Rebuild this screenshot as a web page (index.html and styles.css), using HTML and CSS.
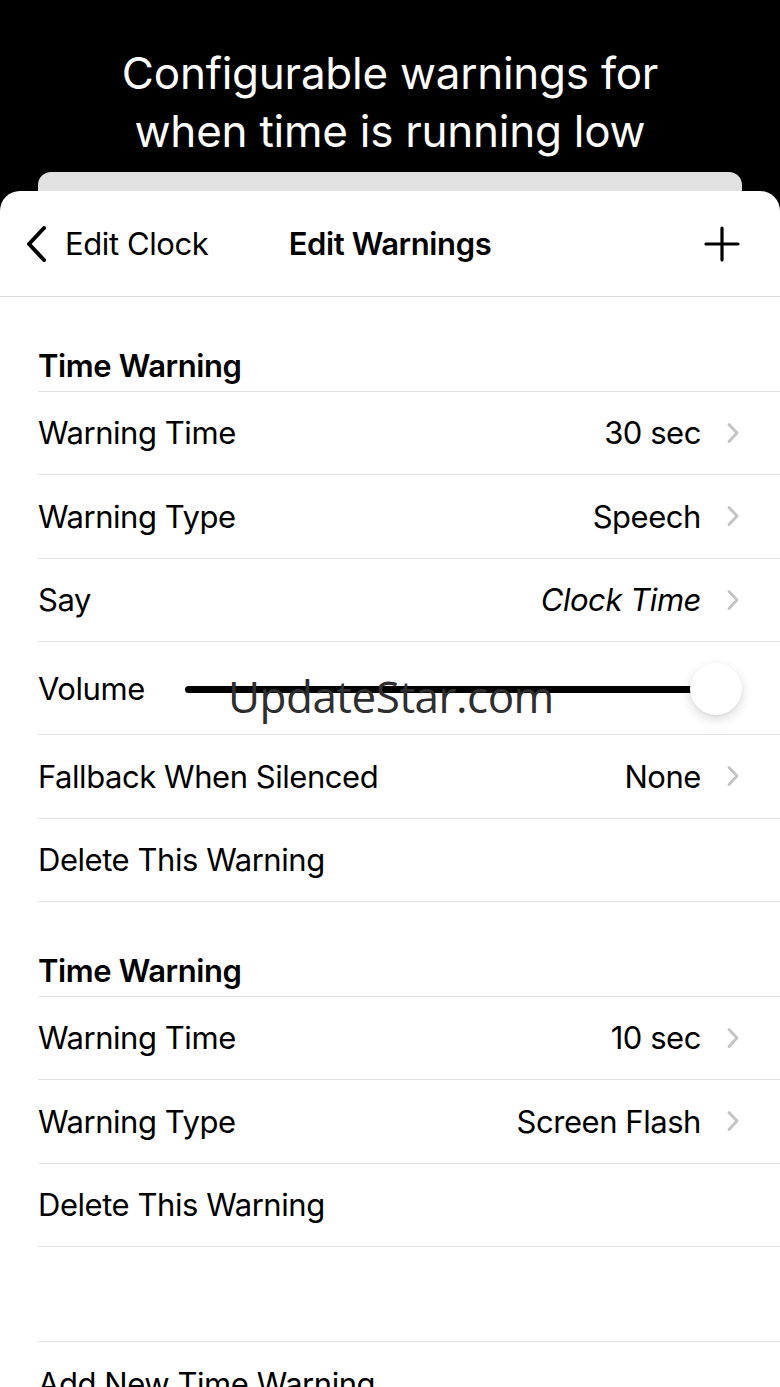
FILE: index.html
```html
<!DOCTYPE html>
<html lang="en">
<head>
<meta charset="utf-8">
<title>Edit Warnings</title>
<link rel="stylesheet" href="styles.css">
</head>
<body>
<div class="page">
  <header class="hero">
    <h1 class="hero-title">Configurable warnings for<br>when time is running low</h1>
  </header>
  <div class="card-behind"></div>
  <main class="sheet">
    <nav class="navbar">
      <div class="nav-back">
        <svg class="back-icon" viewBox="0 0 24 38" width="24" height="38"><path d="M20 3 L5 19 L20 35" fill="none" stroke="#000" stroke-width="4" stroke-linecap="round" stroke-linejoin="round"/></svg>
        <span>Edit Clock</span>
      </div>
      <div class="nav-title">Edit Warnings</div>
      <svg class="plus-icon" viewBox="0 0 36 36" width="36" height="36"><path d="M18 2 V34 M2 18 H34" stroke="#000" stroke-width="3.2" stroke-linecap="round"/></svg>
    </nav>

    <section class="group">
      <div class="group-header">Time Warning</div>
      <div class="row"><span class="label">Warning Time</span><span class="value">30 sec</span><svg class="chev" viewBox="0 0 14 22" width="14" height="22"><path d="M3 2.5 L11 11 L3 19.5" fill="none" stroke="#c4c4c7" stroke-width="3" stroke-linecap="round" stroke-linejoin="round"/></svg></div>
      <div class="row"><span class="label">Warning Type</span><span class="value">Speech</span><svg class="chev" viewBox="0 0 14 22" width="14" height="22"><path d="M3 2.5 L11 11 L3 19.5" fill="none" stroke="#c4c4c7" stroke-width="3" stroke-linecap="round" stroke-linejoin="round"/></svg></div>
      <div class="row"><span class="label">Say</span><span class="value italic">Clock Time</span><svg class="chev" viewBox="0 0 14 22" width="14" height="22"><path d="M3 2.5 L11 11 L3 19.5" fill="none" stroke="#c4c4c7" stroke-width="3" stroke-linecap="round" stroke-linejoin="round"/></svg></div>
      <div class="row row-slider">
        <span class="label">Volume</span>
        <div class="slider"><div class="track"></div><div class="thumb"></div></div>
      </div>
      <div class="row"><span class="label">Fallback When Silenced</span><span class="value">None</span><svg class="chev" viewBox="0 0 14 22" width="14" height="22"><path d="M3 2.5 L11 11 L3 19.5" fill="none" stroke="#c4c4c7" stroke-width="3" stroke-linecap="round" stroke-linejoin="round"/></svg></div>
      <div class="row"><span class="label">Delete This Warning</span></div>
    </section>

    <section class="group">
      <div class="group-header">Time Warning</div>
      <div class="row"><span class="label">Warning Time</span><span class="value">10 sec</span><svg class="chev" viewBox="0 0 14 22" width="14" height="22"><path d="M3 2.5 L11 11 L3 19.5" fill="none" stroke="#c4c4c7" stroke-width="3" stroke-linecap="round" stroke-linejoin="round"/></svg></div>
      <div class="row"><span class="label">Warning Type</span><span class="value">Screen Flash</span><svg class="chev" viewBox="0 0 14 22" width="14" height="22"><path d="M3 2.5 L11 11 L3 19.5" fill="none" stroke="#c4c4c7" stroke-width="3" stroke-linecap="round" stroke-linejoin="round"/></svg></div>
      <div class="row"><span class="label">Delete This Warning</span></div>
    </section>

    <section class="group">
      <div class="group-header group-header-empty"></div>
      <div class="row"><span class="label">Add New Time Warning</span></div>
    </section>
  </main>
  <div class="watermark">UpdateStar.com</div>
</div>
</body>
</html>
```

FILE: styles.css
```css
* { box-sizing: border-box; }
html, body {
  margin: 0;
  padding: 0;
  background: #000;
}
body {
  font-family: Inter, "Noto Sans", "Liberation Sans", sans-serif;
  color: #000;
}
.page {
  position: relative;
  width: 780px;
  height: 1387px;
  overflow: hidden;
  background: #000;
}
.hero {
  padding-top: 44px;
  height: 172px;
}
.hero-title {
  margin: 0;
  color: #fff;
  font-weight: 400;
  font-size: 44px;
  line-height: 58px;
  text-align: center;
  letter-spacing: -0.25px;
}
.card-behind {
  height: 19px;
  margin: 0 38px;
  background: #e1e1e1;
  border-radius: 13px 13px 0 0;
}
.sheet {
  background: #fff;
  border-radius: 20px 20px 0 0;
  min-height: 1200px;
}
.navbar {
  position: relative;
  height: 106px;
  display: flex;
  align-items: center;
  justify-content: space-between;
  padding: 0 40px 0 24px;
  border-bottom: 1px solid #d9d9d9;
  font-size: 31px;
  letter-spacing: -0.4px;
}
.nav-back {
  display: flex;
  align-items: center;
  gap: 17px;
}
.back-icon { display: block; }
.nav-title {
  position: absolute;
  left: 0;
  right: 0;
  text-align: center;
  font-weight: 600;
  pointer-events: none;
}
.plus-icon { display: block; }

.group {
  margin-left: 38px;
}
.group-header {
  height: 94.5px;
  display: flex;
  align-items: flex-end;
  padding-bottom: 8px;
  font-size: 31px;
  line-height: 34px;
  font-weight: 600;
  letter-spacing: -0.4px;
  border-bottom: 1px solid #e2e2e2;
}
.group-header-empty { height: 95px; }
.row {
  height: 83.5px;
  display: flex;
  align-items: center;
  padding-right: 40px;
  font-size: 31px;
  letter-spacing: -0.45px;
  border-bottom: 1px solid #e2e2e2;
}
.label { flex: 1; white-space: nowrap; }
.value { white-space: nowrap; }
.italic { font-style: italic; }
.chev {
  display: block;
  flex: 0 0 auto;
  margin-left: 25px;
}
.row-slider {
  height: 93px;
  padding-right: 38px;
}
.row-slider .label { flex: 0 0 auto; }
.slider {
  position: relative;
  flex: 1;
  height: 52px;
  margin-top: 2px;
  margin-left: 40px;
  display: flex;
  align-items: center;
}
.track {
  flex: 1;
  height: 7px;
  background: #000;
  border-radius: 4px;
  margin-right: 26px;
}
.thumb {
  position: absolute;
  right: 0;
  top: 0;
  width: 52px;
  height: 52px;
  border-radius: 50%;
  background: #fff;
  box-shadow: 0 4px 12px rgba(0,0,0,0.15), 0 1px 2px rgba(0,0,0,0.06);
}
.watermark {
  position: absolute;
  left: 228px;
  top: 668px;
  font-family: "Open Sans", "Noto Sans", sans-serif;
  font-size: 44px;
  line-height: 56px;
  color: #2e2e2e;
  letter-spacing: -0.5px;
  pointer-events: none;
}
```
